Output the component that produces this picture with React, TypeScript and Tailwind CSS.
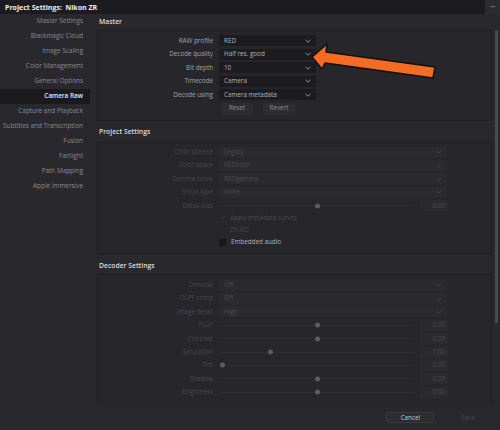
import React from "react";

const sideItems = [
  "Master Settings",
  "Blackmagic Cloud",
  "Image Scaling",
  "Color Management",
  "General Options",
  "Camera Raw",
  "Capture and Playback",
  "Subtitles and Transcription",
  "Fusion",
  "Fairlight",
  "Path Mapping",
  "Apple Immersive",
];

function Chevron({ dim }: { dim?: boolean }) {
  return (
    <svg width="6" height="4" viewBox="0 0 6 4" className="shrink-0">
      <path d="M0.5 0.8 L3 3.2 L5.5 0.8" fill="none" stroke={dim ? "#46464c" : "#9a9aa0"} strokeWidth="0.9" />
    </svg>
  );
}

function Select({ value, wide, dim }: { value: string; wide?: boolean; dim?: boolean }) {
  return (
    <div
      className={
        "flex h-[11px] items-center justify-between pl-[5px] pr-[5px] " +
        (wide ? "w-[228px] " : "w-[97px] ") +
        (dim ? "bg-[#2a2a2f] text-[#4d4d53]" : "bg-[#1c1c20] text-[#b4b4b9]")
      }
    >
      <span className="whitespace-nowrap">{value}</span>
      <Chevron dim={dim} />
    </div>
  );
}

function Row({ label, dim, h, children }: { label: string; dim?: boolean; h: string; children?: React.ReactNode }) {
  return (
    <div className={"flex items-center " + h}>
      <div className={"w-[121px] shrink-0 whitespace-nowrap pr-[6px] text-right " + (dim ? "text-[#4a4a50]" : "text-[#a4a4a9]")}>
        {label}
      </div>
      {children}
    </div>
  );
}

function Slider({ label, thumb, value }: { label: string; thumb: number; value: string }) {
  return (
    <Row label={label} dim h="h-[13.4px]">
      <div className="relative flex h-full w-[196px] items-center">
        <div className="h-px w-full bg-[#2f2f34]" />
        <div
          className="absolute top-1/2 h-[5px] w-[5px] -translate-y-1/2 rounded-full bg-[#5c5c62]"
          style={{ left: thumb }}
        />
      </div>
      <div className="ml-[5px] flex h-[11px] w-[28px] items-center justify-end bg-[#2a2a2f] pr-[3px] text-[#4d4d53]">
        {value}
      </div>
    </Row>
  );
}

function Header({ title, h }: { title: string; h: string }) {
  return (
    <div className={"flex items-center pl-[2px] text-[6.8px] font-semibold text-[#dcdcdf] " + h}>{title}</div>
  );
}

export default function App() {
  return (
    <div
      className="relative flex h-[430px] w-[500px] flex-col overflow-hidden bg-[#28282d] text-[6.3px] leading-none"
      style={{ fontFamily: '"Open Sans", "Noto Sans", sans-serif' }}
    >
      <div className="flex h-[14px] shrink-0 items-center justify-between bg-[#1c1c20]">
        <div className="whitespace-nowrap pl-[5px] text-[7px] font-bold text-[#f0f0f0]">Project Settings:&nbsp; Nikon ZR</div>
        <div className="flex h-[14px] w-[15px] items-center justify-center bg-[#2b2b30] pb-[2px] text-[7px] font-bold tracking-[-0.5px] text-[#9a9aa0]">
          ···
        </div>
      </div>

      <div className="flex flex-1">
        <div className="w-[90px] shrink-0">
          {sideItems.map((item) => (
            <div
              key={item}
              className={
                "flex h-[15px] items-center justify-end whitespace-nowrap pr-[7px] text-[6.4px] " +
                (item === "Camera Raw" ? "bg-[#1a1a1d] font-semibold text-[#ececec]" : "text-[#8c8c92]")
              }
            >
              {item}
            </div>
          ))}
        </div>

        <div className="flex flex-1 flex-col">
          <div className="flex">
            <div className="w-[402px] pl-[7px]">
              <Header title="Master" h="h-[16px]" />
              <div className="border border-[#1f1f23] bg-[#26262b] pt-[3px] pb-[4px]">
                <Row label="RAW profile" h="h-[13.5px]"><Select value="RED" /></Row>
                <Row label="Decode quality" h="h-[13.5px]"><Select value="Half res. good" /></Row>
                <Row label="Bit depth" h="h-[13.5px]"><Select value="10" /></Row>
                <Row label="Timecode" h="h-[13.5px]"><Select value="Camera" /></Row>
                <Row label="Decode using" h="h-[13.5px]"><Select value="Camera metadata" /></Row>
                <div className="flex h-[14px] items-center gap-[10px] pl-[123px]">
                  <div className="flex h-[12px] w-[32px] items-center justify-center rounded-[2px] bg-[#2c2c31] text-[#8e8e94]">Reset</div>
                  <div className="flex h-[12px] w-[32px] items-center justify-center rounded-[2px] bg-[#2c2c31] text-[#8e8e94]">Revert</div>
                </div>
              </div>

              <Header title="Project Settings" h="h-[21px] pt-[3px]" />
              <div className="border border-[#1f1f23] bg-[#26262b] pt-[3px] pb-[5px]">
                <Row label="Color science" dim h="h-[13.4px]"><Select value="Legacy" wide dim /></Row>
                <Row label="Color space" dim h="h-[13.4px]"><Select value="REDcolor" wide dim /></Row>
                <Row label="Gamma curve" dim h="h-[13.4px]"><Select value="REDgamma" wide dim /></Row>
                <Row label="Shoot type" dim h="h-[13.4px]"><Select value="None" wide dim /></Row>
                <Slider label="Detail bias" thumb={96} value="0.00" />
                <div className="flex h-[12px] items-center pl-[123px] text-[#4a4a50]">
                  <span className="w-[9px]">✓</span>
                  <span>Apply metadata curves</span>
                </div>
                <div className="flex h-[12px] items-center pl-[132px] text-[#46464c]">ZR ISO</div>
                <div className="flex h-[12px] items-center pl-[121px] text-[#b4b4b9]">
                  <div className="mr-[5px] h-[7px] w-[7px] bg-[#18181b]" />
                  <span>Embedded audio</span>
                </div>
              </div>

              <Header title="Decoder Settings" h="h-[20px] pt-[3px]" />
              <div className="h-[131px] overflow-hidden border border-b-0 border-[#1f1f23] bg-[#26262b] pt-[3px]">
                <Row label="Denoise" dim h="h-[13.4px]"><Select value="Off" wide dim /></Row>
                <Row label="OLPF comp" dim h="h-[13.4px]"><Select value="Off" wide dim /></Row>
                <Row label="Image detail" dim h="h-[13.4px]"><Select value="High" wide dim /></Row>
                <Slider label="FLUT" thumb={96} value="0.00" />
                <Slider label="Contrast" thumb={96} value="0.00" />
                <Slider label="Saturation" thumb={49} value="1.00" />
                <Slider label="Tint" thumb={1} value="0.00" />
                <Slider label="Shadow" thumb={96} value="0.00" />
                <Slider label="Brightness" thumb={96} value="0.00" />
              </div>
            </div>
            <div className="w-[8px] pl-[3px] pt-[16px]">
              <div className="h-[293px] w-[2.5px] rounded-full bg-[#4a4a50]" />
            </div>
          </div>

          <div className="flex flex-1 items-center justify-end gap-[27px] pr-[25px]">
            <div className="flex h-[11px] w-[48px] items-center justify-center rounded-[3px] border border-[#3a3a40] bg-[#2c2c31] text-[#c8c8cc]">
              Cancel
            </div>
            <div className="text-[#4a4a4f]">Save</div>
          </div>
        </div>
      </div>

      <svg className="pointer-events-none absolute left-0 top-0" width="500" height="430" viewBox="0 0 500 430">
        <polygon
          points="312,57 327,44 326,52 435,67 433,78 325,63 322,69"
          fill="#f36c21"
          stroke="#111"
          strokeWidth="1.5"
          strokeLinejoin="round"
        />
      </svg>
    </div>
  );
}
